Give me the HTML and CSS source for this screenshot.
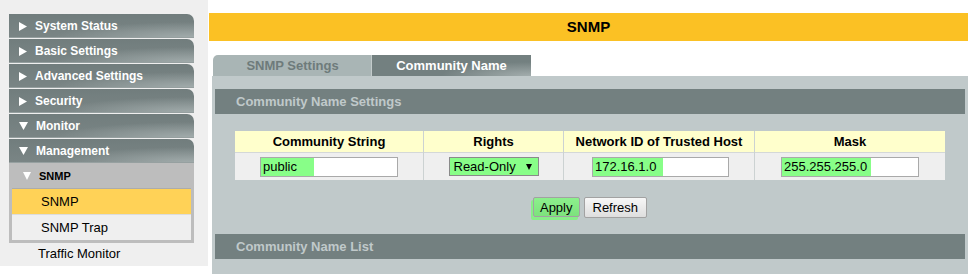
FILE: index.html
```html
<!DOCTYPE html>
<html lang="en">

<head>
    <meta charset="UTF-8">
    <meta name="viewport" content="width=device-width, initial-scale=1.0">
    <title>SNMP - Community Name</title>
    <link rel="stylesheet" href="styles.css">
</head>

<body>
    <div class="sidebar">
        <ul class="menu">
            <li class="menu-item"><svg class="arrow" width="8" height="9" viewBox="0 0 8 9"><polygon points="0,0 8,4.5 0,9" /></svg>System Status</li>
            <li class="menu-item"><svg class="arrow" width="8" height="9" viewBox="0 0 8 9"><polygon points="0,0 8,4.5 0,9" /></svg>Basic Settings</li>
            <li class="menu-item"><svg class="arrow" width="8" height="9" viewBox="0 0 8 9"><polygon points="0,0 8,4.5 0,9" /></svg>Advanced Settings</li>
            <li class="menu-item"><svg class="arrow" width="8" height="9" viewBox="0 0 8 9"><polygon points="0,0 8,4.5 0,9" /></svg>Security</li>
            <li class="menu-item"><svg class="arrow" width="9" height="8" viewBox="0 0 9 8"><polygon points="0,0 9,0 4.5,8" /></svg>Monitor</li>
            <li class="menu-item open"><svg class="arrow" width="9" height="8" viewBox="0 0 9 8"><polygon points="0,0 9,0 4.5,8" /></svg>Management</li>
            <li class="submenu">
                <div class="sub-head"><svg class="arrow" width="8" height="8" viewBox="0 0 8 8"><polygon points="0,0 8,0 4,8" /></svg>SNMP</div>
                <div class="sub-item active">SNMP</div>
                <div class="sub-item">SNMP Trap</div>
            </li>
            <li class="plain-item">Traffic Monitor</li>
        </ul>
    </div>

    <div class="main">
        <div class="title-bar">SNMP</div>

        <div class="tabs">
            <div class="tab tab-off">SNMP Settings</div>
            <div class="tab tab-on">Community Name</div>
        </div>

        <div class="panel">
            <div class="section-bar">Community Name Settings</div>

            <table class="form-table">
                <tr>
                    <th class="col-string">Community String</th>
                    <th class="col-rights">Rights</th>
                    <th class="col-host">Network ID of Trusted Host</th>
                    <th class="col-mask">Mask</th>
                </tr>
                <tr>
                    <td><input type="text" class="field field-string" value="public"></td>
                    <td>
                        <span class="select-wrap">
                            <select class="rights">
                                <option>Read-Only</option>
                                <option>Read-Write</option>
                            </select>
                        </span>
                    </td>
                    <td><input type="text" class="field field-host" value="172.16.1.0"></td>
                    <td><input type="text" class="field field-mask" value="255.255.255.0"></td>
                </tr>
            </table>

            <div class="buttons">
                <button class="btn btn-apply">Apply</button>
                <button class="btn">Refresh</button>
            </div>

            <div class="section-bar list-bar">Community Name List</div>
        </div>
    </div>
</body>

</html>
```

FILE: styles.css
```css
body {
    margin: 0;
    font-family: "Liberation Sans", Arial, sans-serif;
    background-color: #fff;
    display: flex;
    height: 274px;
    overflow: hidden;
}

/* Sidebar menu */
.sidebar {
    width: 208px;
    height: 266px;
    flex-shrink: 0;
    box-sizing: border-box;
    padding: 14px 0 0 9px;
    background-color: #efefef;
}

.menu {
    list-style-type: none;
    margin: 0;
    padding: 0;
    width: 185px;
}

.menu-item {
    height: 24px;
    margin-bottom: 1px;
    display: flex;
    align-items: center;
    padding-left: 10px;
    color: #fff;
    font-size: 12px;
    font-weight: bold;
    border-top-right-radius: 7px;
    background:
        radial-gradient(140px 16px at 100% 100%, #a3adad 0%, rgba(163, 173, 173, 0) 100%),
        linear-gradient(#717d7d, #7a8585);
    box-shadow: inset 0 -1px 0 #96a0a0;
}

.menu-item.open {
    margin-bottom: 0;
}

.menu-item .arrow {
    fill: #fff;
    margin-right: 8px;
}

.submenu {
    background-color: #bdbdbd;
    padding: 0 3px 3px;
}

.sub-head {
    height: 25px;
    display: flex;
    align-items: center;
    padding-left: 11px;
    font-size: 11px;
    font-weight: bold;
    color: #000;
    border-bottom: 1px solid #acacac;
}

.sub-head .arrow {
    fill: #fff;
    margin-right: 8px;
}

.sub-item {
    height: 25px;
    line-height: 25px;
    padding-left: 29px;
    font-size: 13px;
    color: #000;
    background-color: #efefef;
}

.sub-item + .sub-item {
    border-top: 1px solid #dcdcdc;
}

.sub-item.active {
    background-color: #ffd257;
}

.plain-item {
    height: 22px;
    line-height: 22px;
    padding-left: 29px;
    font-size: 13px;
    color: #000;
}

/* Main content */
.main {
    flex: 1;
    margin-left: 1px;
}

.title-bar {
    margin-top: 13px;
    height: 28px;
    line-height: 28px;
    background-color: #fbc124;
    text-align: center;
    font-size: 15px;
    font-weight: bold;
    color: #000;
}

.tabs {
    display: flex;
    margin: 14px 0 0 4px;
    height: 21px;
}

.tab {
    width: 159px;
    text-align: center;
    font-size: 13px;
    font-weight: bold;
    line-height: 21px;
}

.tab-off {
    background-color: #a9b5b5;
    color: #6e7b7b;
    border-top-left-radius: 5px;
    box-shadow: inset -1px 0 0 #c3cbcb;
}

.tab-on {
    color: #fff;
    background:
        radial-gradient(90px 14px at 100% 100%, #a3adad 0%, rgba(163, 173, 173, 0) 100%),
        #738080;
}

.panel {
    margin-left: 3px;
    padding: 13px 3px 20px;
    background-color: #c0c9ca;
}

.section-bar {
    height: 25px;
    line-height: 25px;
    padding-left: 21px;
    background-color: #738080;
    color: #c0c9ca;
    font-size: 13px;
    font-weight: bold;
}

.list-bar {
    margin-top: 16px;
}

.form-table {
    width: calc(100% - 40px);
    margin: 17px 20px 0;
    border-collapse: collapse;
    font-size: 13px;
}

.form-table th {
    height: 21px;
    padding: 0;
    background-color: #ffffcc;
    color: #000;
    font-weight: bold;
}

.form-table td {
    height: 27px;
    padding: 0;
    text-align: center;
    background-color: #efefef;
    border-top: 1px solid #d4d8d8;
}

.form-table th + th,
.form-table td + td {
    border-left: 1px solid #ccd2d2;
}

.col-string {
    width: 188px;
}

.col-rights {
    width: 139px;
}

.col-host {
    width: 190px;
}

.field {
    box-sizing: border-box;
    height: 20px;
    padding: 0 2px;
    border: 1px solid #a9a9a9;
    font-family: inherit;
    font-size: 13px;
    color: #000;
    vertical-align: middle;
}

.field-string {
    width: 138px;
    background: linear-gradient(to right, #88fe88 0 53px, #fff 53px);
}

.field-host {
    width: 137px;
    margin-left: 3px;
    background: linear-gradient(to right, #88fe88 0 70px, #fff 70px);
}

.field-mask {
    width: 138px;
    background: linear-gradient(to right, #88fe88 0 89px, #fff 89px);
}

.select-wrap {
    position: relative;
    display: inline-block;
    vertical-align: middle;
}

.select-wrap::after {
    content: "";
    position: absolute;
    right: 7px;
    top: 7px;
    border-left: 3.5px solid transparent;
    border-right: 3.5px solid transparent;
    border-top: 6px solid #000;
    pointer-events: none;
}

.rights {
    appearance: none;
    -webkit-appearance: none;
    box-sizing: border-box;
    width: 90px;
    height: 19px;
    padding: 0 0 0 4px;
    border: 1px solid #8a8a8a;
    border-radius: 0;
    background-color: #88fe88;
    font-family: inherit;
    font-size: 13px;
    color: #000;
}

.buttons {
    display: flex;
    justify-content: center;
    gap: 4px;
    margin-top: 17px;
}

.btn {
    height: 21px;
    padding: 0 8px;
    border: 1px solid #a2a2a2;
    border-radius: 2px;
    background: linear-gradient(#f7f7f7, #dedede);
    font-family: inherit;
    font-size: 13px;
    color: #000;
}

.btn-apply {
    height: 20px;
    padding: 0 6px;
    background: linear-gradient(#8cf08c, #7de27d);
    box-shadow: -2px 3px 0 0 #88ee88;
}
```
